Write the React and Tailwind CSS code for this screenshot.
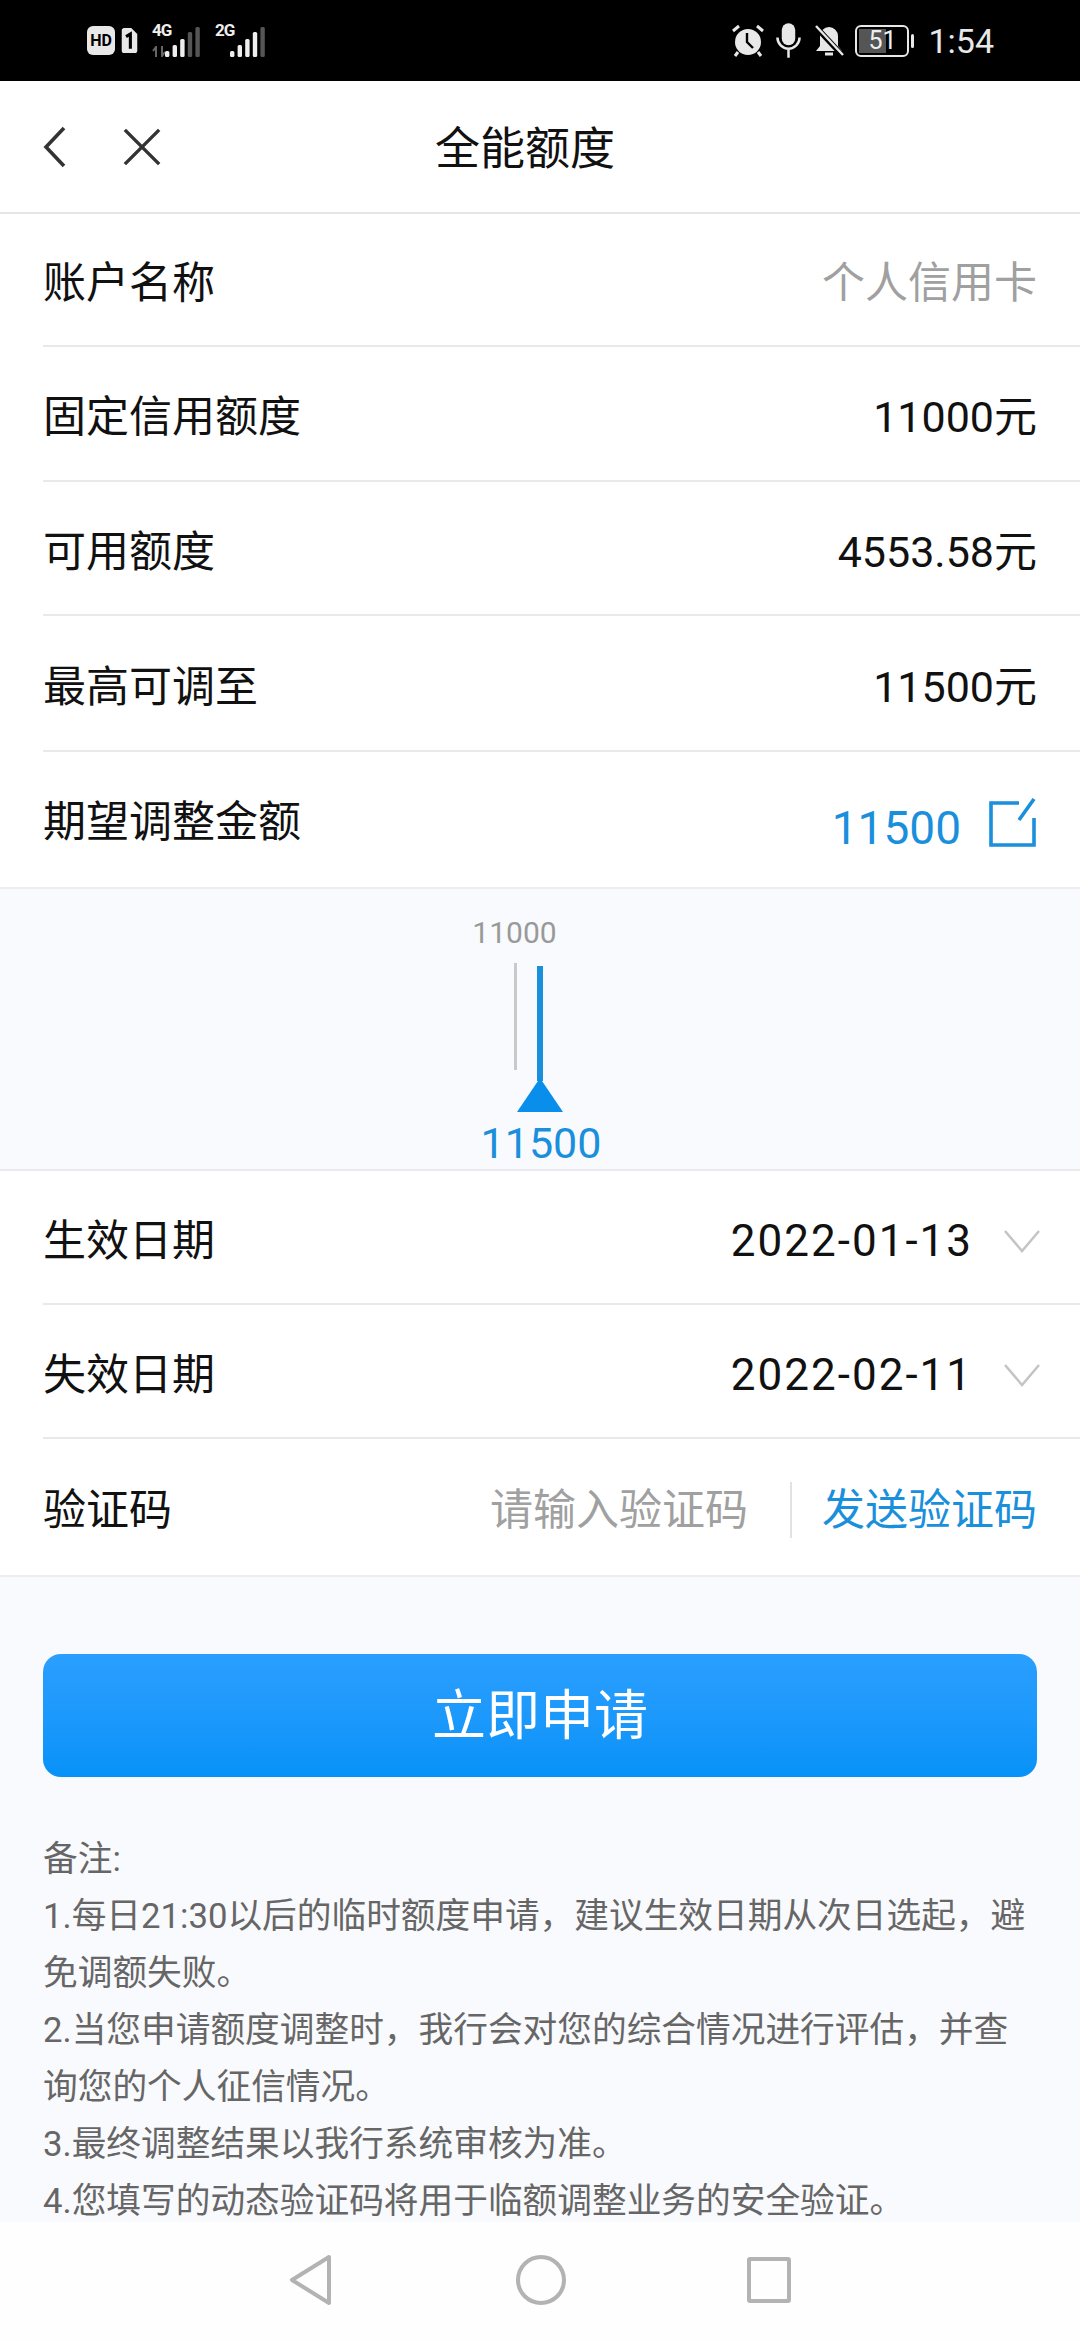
import React from "react";

const font = { fontFamily: '"Roboto","Noto Sans CJK SC",sans-serif' };

function Row({ h, label, children }) {
  return (
    <div className={`flex pl-[43px] bg-white ${h}`}>
      <div className="flex flex-1 items-center justify-between pr-[43px] pt-[8px] border-b-2 border-[#e9e9ec]">
        <span className="text-[43px] text-[#111] leading-none">{label}</span>
        {children}
      </div>
    </div>
  );
}

function Chevron() {
  return (
    <svg width="38" height="26" viewBox="0 0 38 26" fill="none" className="ml-[30px] mr-[-4px]">
      <path d="M2 3 L19 23 L36 3" stroke="#c4c4c4" strokeWidth="2.5" />
    </svg>
  );
}

function Bars({ dim }) {
  const hs = [6, 12, 18, 25, 30];
  return (
    <svg width="35" height="30" viewBox="0 0 35 30">
      {hs.map((h, i) => (
        <rect key={i} x={i * 7.6} y={30 - h} width="4.4" height={h} rx="1.5" fill={i >= dim ? "#555" : "#eee"} />
      ))}
    </svg>
  );
}

export default function App() {
  return (
    <div className="w-[1080px] h-[2340px] bg-[#f9fafd] flex flex-col overflow-hidden" style={font}>
      {/* status bar */}
      <div className="h-[81px] bg-black flex items-center justify-between pl-[87px] pr-[86px] shrink-0">
        <div className="flex items-center">
          <div className="w-[28px] h-[29px] rounded-[6px] bg-[#e8e8e8] text-black text-[16px] font-bold flex items-center justify-center leading-none">HD</div>
          <svg width="17" height="25" viewBox="0 0 18 29" className="ml-[6px]">
            <path d="M3 0 H11 L18 7 V26 a3 3 0 0 1 -3 3 H3 a3 3 0 0 1 -3 -3 V3 a3 3 0 0 1 3 -3z" fill="#e8e8e8" />
            <path d="M5 10 L10 7 V24" stroke="#000" strokeWidth="3.6" fill="none" />
          </svg>
          <div className="relative w-[48px] h-[32px] ml-[14px]">
            <span className="absolute left-0 top-[-3px] text-[17px] font-bold tracking-[-1px] text-[#eee] leading-none">4G</span>
            <svg width="15" height="11" viewBox="0 0 15 11" fill="none" className="absolute left-0 bottom-0">
              <path d="M4 11 V1 L1 5 M10 0 V10 L13 6" stroke="#666" strokeWidth="2" />
            </svg>
            <div className="absolute right-0 bottom-0"><Bars dim={3} /></div>
          </div>
          <div className="relative w-[50px] h-[32px] ml-[15px]">
            <span className="absolute left-0 top-[-3px] text-[17px] font-bold tracking-[-1px] text-[#eee] leading-none">2G</span>
            <div className="absolute right-0 bottom-0"><Bars dim={4} /></div>
          </div>
        </div>
        <div className="flex items-center">
          <svg width="34" height="34" viewBox="0 0 34 34" fill="none">
            <circle cx="17" cy="18" r="13" fill="#e8e8e8" />
            <path d="M16 9 V18 L22 24" stroke="#000" strokeWidth="2.4" />
            <path d="M2 7 L8 2 M32 7 L26 2 M7 28 L4 32 M27 28 L30 32" stroke="#e8e8e8" strokeWidth="3" />
          </svg>
          <svg width="25" height="35" viewBox="0 0 26 36" fill="none" className="ml-[11px]">
            <rect x="6" y="0" width="14" height="23" rx="7" fill="#e8e8e8" />
            <path d="M1.5 15 a11.5 11.5 0 0 0 23 0 M13 27 V36" stroke="#e8e8e8" strokeWidth="2.6" />
          </svg>
          <svg width="30" height="32" viewBox="0 0 30 32" fill="none" className="ml-[13px]">
            <path d="M15 2 a9 9 0 0 1 9 9 V21 L28 26 H2 L6 21 V11 a9 9 0 0 1 9 -9z" fill="#e8e8e8" />
            <path d="M11 29 H19" stroke="#e8e8e8" strokeWidth="3" />
            <path d="M1 1 L29 31" stroke="#000" strokeWidth="5.5" />
            <path d="M2 1 L29 30" stroke="#e8e8e8" strokeWidth="2.4" />
          </svg>
          <div className="relative w-[54px] h-[32px] ml-[11px] rounded-[6px] border-2 border-[#e8e8e8] overflow-hidden">
            <div className="absolute left-[2px] top-[2px] bottom-[2px] w-[27px] bg-[#555]"></div>
            <span className="absolute inset-0 flex items-center justify-center text-[#eee] text-[25px] leading-none">51</span>
          </div>
          <div className="w-[3px] h-[14px] bg-[#e8e8e8] ml-[2px] rounded-sm"></div>
          <span className="text-[#e8e8e8] text-[34px] leading-none ml-[14px]">1:54</span>
        </div>
      </div>

      {/* header */}
      <div className="relative h-[133px] bg-white border-b-2 border-[#e6e6e8] flex items-center justify-center shrink-0">
        <div className="absolute left-[43px] top-[45px] flex items-center">
          <svg width="24" height="42" viewBox="0 0 24 42" fill="none">
            <path d="M21 2 L3 21 L21 40" stroke="#333" strokeWidth="3.6" />
          </svg>
          <svg width="40" height="40" viewBox="0 0 42 42" fill="none" className="ml-[55px]">
            <path d="M3 3 L39 39 M39 3 L3 39" stroke="#333" strokeWidth="3.6" />
          </svg>
        </div>
        <span className="text-[45px] text-[#111] leading-none ml-[-30px] mt-[6px]">全能额度</span>
      </div>

      <Row h="h-[133px] shrink-0" label="账户名称"><span className="text-[43px] text-[#a0a0a0] leading-none">个人信用卡</span></Row>
      <Row h="h-[135px] shrink-0" label="固定信用额度"><span className="text-[43px] text-[#111] leading-none">11000元</span></Row>
      <Row h="h-[134px] shrink-0" label="可用额度"><span className="text-[43px] text-[#111] leading-none">4553.58元</span></Row>
      <Row h="h-[136px] shrink-0" label="最高可调至"><span className="text-[43px] text-[#111] leading-none">11500元</span></Row>
      <div className="h-[137px] shrink-0 flex items-center justify-between bg-white px-[43px] pt-[6px] border-b-2 border-[#ecedf0]">
        <span className="text-[43px] text-[#111] leading-none">期望调整金额</span>
        <div className="flex items-center">
          <span className="text-[46px] text-[#1a8fdc] leading-none mt-[10px]">11500</span>
          <svg width="48" height="50" viewBox="0 0 48 50" fill="none" className="ml-[28px]">
            <path d="M30 5 H2 V47 H45 V20 M45 1 L30 22" stroke="#1a8fdc" strokeWidth="3.6" />
          </svg>
        </div>
      </div>

      {/* slider */}
      <div className="relative h-[282px] shrink-0 border-b-2 border-[#e9eaed]">
        <span className="absolute left-[472px] top-[29px] w-[85px] text-center text-[30px] text-[#999] leading-none">11000</span>
        <div className="absolute left-[514px] top-[74px] w-[3px] h-[107px] bg-[#c9c9c9]"></div>
        <svg width="50" height="146" viewBox="0 0 50 146" className="absolute left-[515px] top-[77px]">
          <rect x="22" y="0" width="6" height="115" fill="#1a8fdc" />
          <path d="M25 112 L48 146 H2 Z" fill="#0a8eec" />
        </svg>
        <span className="absolute left-[471px] top-[233px] w-[140px] text-center text-[43px] text-[#1a8fdc] leading-none">11500</span>
      </div>

      <Row h="h-[134px] shrink-0" label="生效日期">
        <div className="flex items-center">
          <span className="text-[44px] tracking-[2px] text-[#111] leading-none">2022-01-13</span>
          <Chevron />
        </div>
      </Row>
      <Row h="h-[134px] shrink-0" label="失效日期">
        <div className="flex items-center">
          <span className="text-[44px] tracking-[2px] text-[#111] leading-none">2022-02-11</span>
          <Chevron />
        </div>
      </Row>
      <div className="h-[138px] shrink-0 flex items-center justify-between bg-white px-[43px] pt-[6px] border-b-2 border-[#ecedf0]">
        <span className="text-[43px] text-[#111] leading-none">验证码</span>
        <div className="flex items-center">
          <span className="text-[43px] text-[#a0a0a0] leading-none">请输入验证码</span>
          <div className="w-[2px] h-[56px] bg-[#e2e2e2] ml-[42px] mr-[30px]"></div>
          <span className="text-[43px] text-[#1a8fdc] leading-none">发送验证码</span>
        </div>
      </div>

      {/* button */}
      <div className="px-[43px] pt-[77px] shrink-0">
        <div className="h-[123px] pt-[2px] rounded-[18px] bg-gradient-to-b from-[#2a9fff] to-[#0592f8] flex items-center justify-center text-white text-[54px] leading-none">立即申请</div>
      </div>

      {/* notes */}
      <div className="px-[43px] pt-[54px] text-[34.7px] leading-[57px] text-[#666] shrink-0">
        <p>备注:</p>
        <p>1.每日21:30以后的临时额度申请，建议生效日期从次日选起，避免调额失败。</p>
        <p>2.当您申请额度调整时，我行会对您的综合情况进行评估，并查询您的个人征信情况。</p>
        <p>3.最终调整结果以我行系统审核为准。</p>
        <p>4.您填写的动态验证码将用于临额调整业务的安全验证。</p>
      </div>

      {/* nav */}
      <div className="flex-1 mt-[-8px] bg-[#fefefe] flex items-center justify-center pb-[2px]">
        <svg width="44" height="52" viewBox="0 0 44 52" fill="none" className="ml-[-2px]">
          <path d="M41 3 L4 26 L41 49 Z" stroke="#b3b3b3" strokeWidth="4" strokeLinejoin="round" />
        </svg>
        <div className="w-[50px] h-[50px] rounded-full border-[4px] border-[#b3b3b3] ml-[184px]"></div>
        <div className="w-[44px] h-[46px] rounded-[3px] border-[4px] border-[#b3b3b3] ml-[181px]"></div>
      </div>
    </div>
  );
}
